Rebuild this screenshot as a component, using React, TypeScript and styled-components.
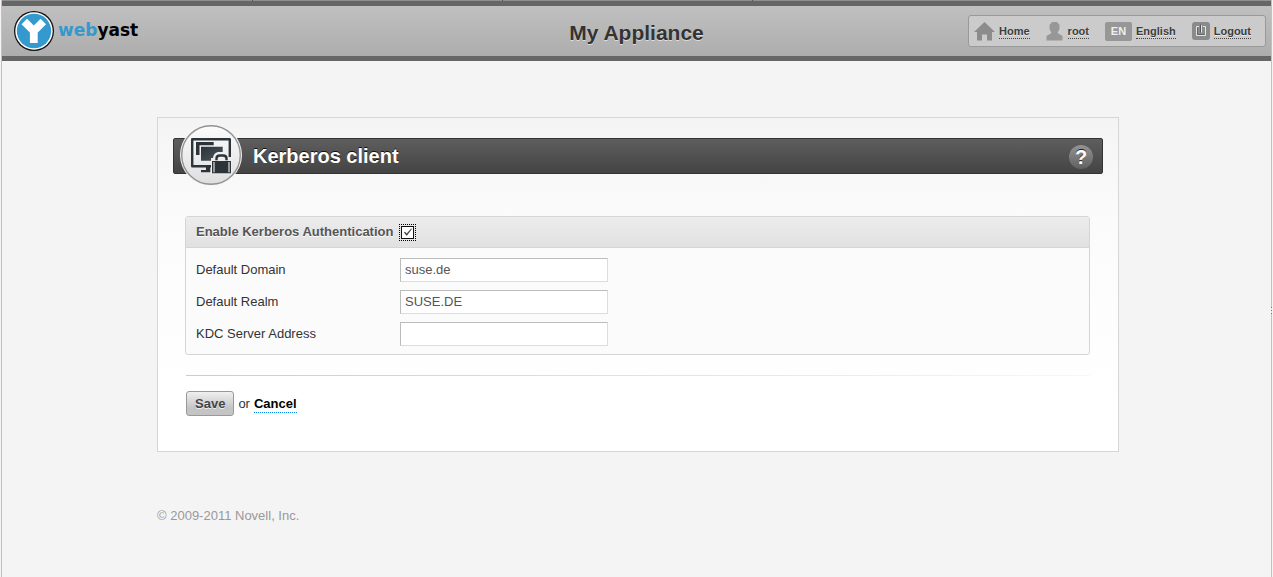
import React from "react";
import styled, { createGlobalStyle } from "styled-components";

const GlobalStyle = createGlobalStyle`
  *, *::before, *::after { box-sizing: border-box; }
  html { min-height: 100%; display: flex; background: #f6f3f1; }
  body { flex: 1; display: flex; margin: 0; color: #333; font: 13px/16px "Liberation Sans", Arial, Helvetica, sans-serif; }
  #root { flex: 1; display: flex; min-width: 0; }
`;

const Page = styled.div`
  flex: 1;
  min-width: 0;
  margin: 0 1px 0 1px;
  background: #f4f4f4;
  border: 1px solid #c8c0c0;
  border-width: 0 1px;
  position: relative;
`;

const Grip = styled.div`
  position: absolute;
  right: -1px;
  top: 307px;
  width: 1px;
  height: 7px;
  background: repeating-linear-gradient(#777 0 1px, #e8e4e4 1px 3px);
`;

const TopEdge = styled.div`
  height: 1px;
  background: repeating-linear-gradient(90deg, #8f918e 0 249px, #555 249px 250px) 1px 0 / 750px 1px no-repeat #8f918e;
`;

const Header = styled.header`
  display: grid;
  grid-template-columns: 1fr auto 1fr;
  align-items: center;
  height: 60px;
  padding: 0 5px 0 11px;
  border: 5px solid #666;
  border-width: 5px 0;
  background: linear-gradient(#c0c0c0, #adadad);
`;

const Logo = styled.a`
  display: flex;
  align-items: center;
  gap: 3px;
  color: #000;
  text-decoration: none;
  font: bold 17px/20px "DejaVu Sans", Verdana, sans-serif;
`;

const LogoText = styled.span`
  padding-bottom: 2px;
`;

const LogoAccent = styled.span`
  color: #3399cf;
`;

const Title = styled.h1`
  margin: 0;
  padding: 4px 6px 0 0;
  font-size: 21px;
  line-height: 24px;
  color: #333;
  text-shadow: 0 1px 0 #ddd;
`;

const Nav = styled.nav`
  justify-self: end;
  display: flex;
  align-items: center;
  gap: 16px;
  height: 32px;
  padding: 0 14px 0 5px;
  border: 1px solid #999;
  border-radius: 3px;
  background: #cbcbcb;
`;

const NavItem = styled.div`
  display: flex;
  align-items: center;
  gap: 4px;
`;

const NavLink = styled.a`
  color: #3d3d3d;
  font-weight: bold;
  font-size: 11px;
  line-height: 14px;
  text-decoration: none;
  text-shadow: 0 1px 0 #e6e6e6;
  border-bottom: 1px dotted #444;
`;

const LangBadge = styled.span`
  width: 27px;
  border-radius: 2px;
  background: #979797;
  color: #eee;
  font-size: 11px;
  font-weight: bold;
  line-height: 19px;
  text-align: center;
`;

const Main = styled.main`
  max-width: 989px;
  margin: 0 auto;
  padding: 56px 12px 0 15px;
`;

const Panel = styled.section`
  padding: 20px 15px 35px;
  border: 1px solid #d5d5da;
  background: linear-gradient(#f4f4f4, #fbfbfb 30%, #fff 85%);
`;

const TitleBar = styled.div`
  position: relative;
  display: flex;
  align-items: center;
  justify-content: space-between;
  height: 36px;
  padding: 0 9px 0 79px;
  border: 1px solid #333;
  border-radius: 2px;
  background: linear-gradient(#5e5e5e, #444);
`;

const Badge = styled.div`
  position: absolute;
  left: 6px;
  top: -15px;
  width: 62px;
  height: 62px;
`;

const PanelTitle = styled.h2`
  margin: 0;
  font-size: 20px;
  line-height: 24px;
  color: #fff;
  text-shadow: 0 -1px 0 #111;
`;

const HelpButton = styled.button`
  width: 24px;
  height: 24px;
  margin-top: 2px;
  padding: 0;
  border: 0;
  border-radius: 50%;
  background: linear-gradient(#949494, #606060);
  color: #fff;
  font: bold 20px/24px "Liberation Sans", Arial, sans-serif;
  text-shadow: 0 -1px 0 #222;
`;

const Form = styled.form`
  margin: 42px 13px 0 12px;
`;

const Group = styled.div`
  border: 1px solid #d5d5d5;
  border-radius: 3px;
  background: #fbfbfb;
`;

const GroupHead = styled.label`
  display: flex;
  align-items: center;
  gap: 6px;
  height: 31px;
  padding: 0 10px;
  border-bottom: 1px solid #d5d5d5;
  background: linear-gradient(#ececec, #e1e1e1);
  color: #555;
  font-weight: bold;
  text-shadow: 0 1px 0 #fff;
`;

const Check = styled.input`
  appearance: none;
  width: 13px;
  height: 13px;
  margin: 2px;
  border: 1px solid #111;
  outline: 1px dotted #000;
  outline-offset: 1px;
  background: #fff;
  display: grid;
  place-items: center;

  &:checked::before {
    content: "";
    width: 9px;
    height: 9px;
    background: #444;
    clip-path: polygon(5% 52%, 18% 48%, 36% 68%, 86% 10%, 94% 16%, 40% 88%, 32% 88%);
  }
`;

const Fields = styled.div`
  display: grid;
  gap: 8px;
  padding: 10px 10px 8px;
`;

const Field = styled.label`
  display: grid;
  grid-template-columns: 204px 208px;
  align-items: center;
`;

const TextInput = styled.input`
  width: 100%;
  height: 24px;
  padding: 0 4px 2px;
  border: 1px solid #ddd;
  border-top-color: #bbb;
  border-left-color: #bbb;
  background: #fff;
  color: #555;
  font: inherit;
  outline: none;
`;

const Divider = styled.hr`
  height: 1px;
  margin: 20px 0 15px 1px;
  border: 0;
  background: linear-gradient(90deg, #ccc, #f8f8f8);
`;

const Actions = styled.div`
  display: flex;
  align-items: baseline;
  gap: 4px;
  padding-left: 1px;
`;

const SaveButton = styled.button`
  height: 25px;
  padding: 0 8px;
  border: 1px solid #999;
  border-radius: 3px;
  background: linear-gradient(#f0f0f0, #c4c4c4 70%);
  color: #444;
  font: bold 13px/16px "Liberation Sans", Arial, sans-serif;
  text-shadow: 0 1px 0 #eee;
`;

const CancelLink = styled.a`
  color: #000;
  font-weight: bold;
  text-decoration: none;
  border-bottom: 1px dotted #0088ee;
`;

const Footer = styled.footer`
  padding: 56px 0 48px;
  color: #999;
`;

const LogoMark = () => (
  <svg width="42" height="42" viewBox="0 0 42 42" aria-hidden="true">
    <circle cx="21" cy="21" r="20" fill="#111" />
    <circle cx="21" cy="21" r="18.7" fill="#fff" />
    <circle cx="21" cy="21" r="17.2" fill="#3399cf" />
    <path d="M11.300 11.500 20.800 21 30.300 11.500M20.800 19V33" fill="none" stroke="#fff" strokeWidth="7.800" />
  </svg>
);

const HomeIcon = () => (
  <svg width="21" height="19" viewBox="0 0 21 19" fill="#8c8c8c" aria-hidden="true">
    <path d="M10.5 0 21 10H18V18.5H13V12.500H8V18.500H3V10H0Z" />
  </svg>
);

const UserIcon = () => (
  <svg width="18" height="19" viewBox="0 0 18 19" fill="#979797" aria-hidden="true">
    <path d="M6 0H11L13.500 3V7L11.500 11L16.500 14V18.500H0.500V14L5.500 11L3.500 7V3Z" />
  </svg>
);

const PowerIcon = () => (
  <svg width="18" height="18" viewBox="0 0 18 18" aria-hidden="true">
    <rect width="18" height="18" rx="3" fill="#8a8a8a" />
    <path d="M7 4.500H4.500V13.500H13.500V4.500H11" fill="none" stroke="#e4e4e4" />
    <path d="M5.500 5.500V12.500H12.500" fill="none" stroke="#666" />
    <path d="M8.500 2.500V10.500" stroke="#555" />
    <path d="M9.500 3V10.500" stroke="#e4e4e4" />
  </svg>
);

const KerberosIcon = () => (
  <svg width="62" height="62" viewBox="0 0 62 62" aria-hidden="true">
    <defs>
      <linearGradient id="disc" x1="0" y1="0" x2="0" y2="1">
        <stop offset="0" stopColor="#fcfcfc" />
        <stop offset="1" stopColor="#dedede" />
      </linearGradient>
      <linearGradient id="screen" x1="0" y1="0" x2="1" y2="1">
        <stop offset="0" stopColor="#2c3439" />
        <stop offset="1" stopColor="#4a565c" />
      </linearGradient>
    </defs>
    <circle cx="31" cy="31" r="31" fill="#f6f6f6" />
    <circle cx="31" cy="31" r="29.300" fill="url(#disc)" stroke="#929292" strokeWidth="1.400" />
    <path d="M31 42.200H12.200V15.200H49.800V33" fill="none" stroke="#2c3439" strokeWidth="2.400" strokeLinejoin="round" />
    <path d="M16 18H33.700V21.300H19.500V31H16Z" fill="#2c3439" />
    <path d="M21 22.700H42.700V28H38Q33.500 29 33 34H31V36.700H21Z" fill="url(#screen)" />
    <path d="M26 43H30.300V48.300H21V46H26Z" fill="#2c3439" />
    <path d="M36.500 37V34.500Q36.500 31.500 40 31.500H43Q46.500 31.500 46.500 34.500V37" fill="none" stroke="#2c3439" strokeWidth="2.400" />
    <rect x="31" y="36.300" width="21" height="14" fill="#f0f0f0" />
    <rect x="32" y="37" width="19" height="12.300" fill="#2c3439" />
    <path d="M34 38V48.300M49 38V48.300" stroke="#fff" />
  </svg>
);

const fields = [
  { id: "domain", label: "Default Domain", value: "suse.de" },
  { id: "realm", label: "Default Realm", value: "SUSE.DE" },
  { id: "kdc", label: "KDC Server Address", value: "" },
];

export default function App() {
  return (
    <>
      <GlobalStyle />
      <Page>
        <TopEdge />
        <Header>
          <Logo href="#">
            <LogoMark />
            <LogoText><LogoAccent>web</LogoAccent>yast</LogoText>
          </Logo>
          <Title>My Appliance</Title>
          <Nav>
            <NavItem><HomeIcon /><NavLink href="#home">Home</NavLink></NavItem>
            <NavItem><UserIcon /><NavLink href="#root-user">root</NavLink></NavItem>
            <NavItem><LangBadge>EN</LangBadge><NavLink href="#language">English</NavLink></NavItem>
            <NavItem><PowerIcon /><NavLink href="#logout">Logout</NavLink></NavItem>
          </Nav>
        </Header>
        <Main>
          <Panel>
            <TitleBar>
              <Badge><KerberosIcon /></Badge>
              <PanelTitle>Kerberos client</PanelTitle>
              <HelpButton type="button" aria-label="Help">?</HelpButton>
            </TitleBar>
            <Form onSubmit={(e) => e.preventDefault()}>
              <Group>
                <GroupHead htmlFor="enabled">
                  Enable Kerberos Authentication
                  <Check id="enabled" type="checkbox" defaultChecked />
                </GroupHead>
                <Fields>
                  {fields.map((f) => (
                    <Field key={f.id} htmlFor={f.id}>
                      {f.label}
                      <TextInput id={f.id} type="text" defaultValue={f.value} />
                    </Field>
                  ))}
                </Fields>
              </Group>
              <Divider />
              <Actions>
                <SaveButton type="submit">Save</SaveButton>
                <span>or</span>
                <CancelLink href="#cancel">Cancel</CancelLink>
              </Actions>
            </Form>
          </Panel>
          <Footer>© 2009-2011 Novell, Inc.</Footer>
        </Main>
        <Grip />
      </Page>
    </>
  );
}
